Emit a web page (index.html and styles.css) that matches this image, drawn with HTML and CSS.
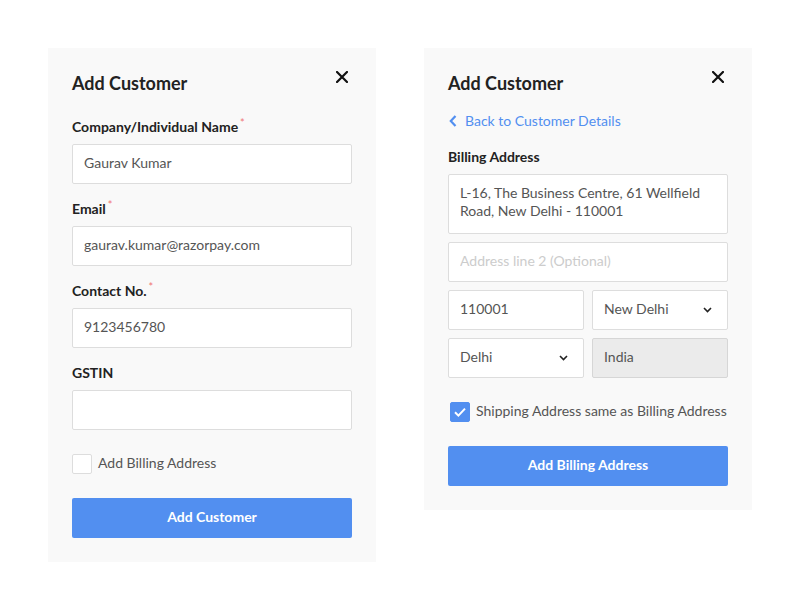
FILE: index.html
```html
<!DOCTYPE html>
<html lang="en">
<head>
  <meta charset="UTF-8">
  <meta name="viewport" content="width=device-width, initial-scale=1.0">
  <title>Add Customer</title>
  <link rel="stylesheet" href="styles.css">
</head>
<body>

  <!-- Step 1: customer details -->
  <div class="card">
    <div class="card-head">
      <h2>Add Customer</h2>
      <button class="close" aria-label="Close">
        <svg width="12" height="12" viewBox="0 0 12 12"><path d="M1 1L11 11M11 1L1 11" stroke="#111" stroke-width="2.2" stroke-linecap="square"/></svg>
      </button>
    </div>

    <div class="fields">
      <div class="field">
        <label>Company/Individual Name<span class="req">*</span></label>
        <input class="input" type="text" value="Gaurav Kumar">
      </div>
      <div class="field">
        <label>Email<span class="req">*</span></label>
        <input class="input" type="text" value="gaurav.kumar@razorpay.com">
      </div>
      <div class="field">
        <label>Contact No.<span class="req">*</span></label>
        <input class="input" type="text" value="9123456780">
      </div>
      <div class="field last">
        <label>GSTIN</label>
        <input class="input" type="text" value="">
      </div>
    </div>

    <div class="check">
      <span class="box"></span>
      <span class="check-label">Add Billing Address</span>
    </div>

    <button class="primary">Add Customer</button>
  </div>

  <!-- Step 2: billing address -->
  <div class="card">
    <div class="card-head">
      <h2>Add Customer</h2>
      <button class="close" aria-label="Close">
        <svg width="12" height="12" viewBox="0 0 12 12"><path d="M1 1L11 11M11 1L1 11" stroke="#111" stroke-width="2.2" stroke-linecap="square"/></svg>
      </button>
    </div>

    <a class="back-link" href="#">
      <svg width="8" height="12" viewBox="0 0 8 12"><path d="M6.5 1L1.8 6l4.7 5" fill="none" stroke="#528ff0" stroke-width="2.2"/></svg>
      Back to Customer Details
    </a>

    <div class="field">
      <label>Billing Address</label>
      <textarea class="input area">L-16, The Business Centre, 61 Wellfield Road, New Delhi - 110001</textarea>
    </div>

    <div class="stack">
      <input class="input" type="text" placeholder="Address line 2 (Optional)">
      <div class="row">
        <input class="input" type="text" value="110001">
        <div class="input select">
          <span>New Delhi</span>
          <svg width="9" height="6" viewBox="0 0 9 6"><path d="M1 1l3.5 3.5L8 1" fill="none" stroke="#222" stroke-width="1.6"/></svg>
        </div>
      </div>
      <div class="row">
        <div class="input select">
          <span>Delhi</span>
          <svg width="9" height="6" viewBox="0 0 9 6"><path d="M1 1l3.5 3.5L8 1" fill="none" stroke="#222" stroke-width="1.6"/></svg>
        </div>
        <input class="input" type="text" value="India" disabled>
      </div>
    </div>

    <div class="check checked">
      <span class="box">
        <svg width="14" height="12" viewBox="0 0 14 12"><path d="M2 6.2l3.4 3.4L12 2.6" fill="none" stroke="#fff" stroke-width="2"/></svg>
      </span>
      <span class="check-label">Shipping Address same as Billing Address</span>
    </div>

    <button class="primary">Add Billing Address</button>
  </div>

</body>
</html>
```

FILE: styles.css
```css
body {
  margin: 0;
  padding: 48px;
  display: flex;
  align-items: flex-start;
  gap: 48px;
  background: #fff;
  font-family: Lato, "Open Sans", sans-serif;
  font-size: 14px;
  color: #333;
}
.card {
  width: 328px;
  box-sizing: border-box;
  padding: 24px;
  background: #f9f9f9;
}
.card-head {
  display: flex;
  justify-content: space-between;
  align-items: flex-start;
  margin-bottom: 18px;
}
.card-head h2 {
  margin: 0;
  font-size: 18px;
  line-height: 22px;
  font-weight: 700;
  color: #222;
}
.close {
  margin: -1px 4px 0 0;
  padding: 0;
  border: none;
  background: none;
  width: 12px;
  height: 12px;
  cursor: pointer;
}
.close svg {
  display: block;
}
.fields {
  padding-top: 6px;
}
.field {
  margin-bottom: 16px;
}
.field.last {
  margin-bottom: 24px;
}
.field label {
  display: block;
  font-weight: 700;
  line-height: 18px;
  margin-bottom: 8px;
  color: #222;
}
.req {
  color: #f07575;
  font-size: 11px;
  line-height: 0;
  vertical-align: 5px;
  margin-left: 2px;
  font-weight: 400;
}
.input {
  display: block;
  width: 100%;
  height: 40px;
  box-sizing: border-box;
  padding: 0 11px 3px;
  border: 1px solid #ddd;
  border-radius: 2px;
  background: #fff;
  font-family: inherit;
  font-size: 14px;
  color: #555;
  outline: none;
}
.input::placeholder {
  color: #ccc;
}
.input:disabled {
  background: #ebebeb;
  border-color: #d6d6d6;
  color: #555;
}
.area {
  height: 60px;
  padding: 9px 11px;
  line-height: 18px;
  resize: none;
  overflow: hidden;
}
.back-link {
  display: flex;
  align-items: center;
  gap: 8px;
  line-height: 18px;
  color: #528ff0;
  text-decoration: none;
  margin-bottom: 18px;
}
.back-link svg {
  margin-left: 1px;
}
.card .field + .stack {
  margin-top: -8px;
}
.stack {
  display: flex;
  flex-direction: column;
  gap: 8px;
  margin-bottom: 24px;
}
.row {
  display: grid;
  grid-template-columns: 1fr 1fr;
  gap: 8px;
}
.row .input {
  min-width: 0;
}
.select {
  display: flex;
  align-items: center;
  justify-content: space-between;
  padding: 0 15px 0 11px;
}
.select span {
  padding-bottom: 3px;
}
.check {
  display: flex;
  align-items: center;
  gap: 6px;
  height: 20px;
  color: #555;
  margin-bottom: 24px;
}
.check-label {
  padding-bottom: 4px;
}
.box {
  width: 20px;
  height: 20px;
  box-sizing: border-box;
  border: 1px solid #ddd;
  border-radius: 2px;
  background: #fff;
  display: flex;
  align-items: center;
  justify-content: center;
}
.checked .box {
  margin-left: 2px;
  background: #528ff0;
  border-color: #528ff0;
}
.primary {
  display: block;
  width: 100%;
  height: 40px;
  padding: 0 0 4px;
  border: none;
  border-radius: 2px;
  background: #528ff0;
  color: #fff;
  font-family: inherit;
  font-size: 14px;
  font-weight: 700;
  cursor: pointer;
}
```
